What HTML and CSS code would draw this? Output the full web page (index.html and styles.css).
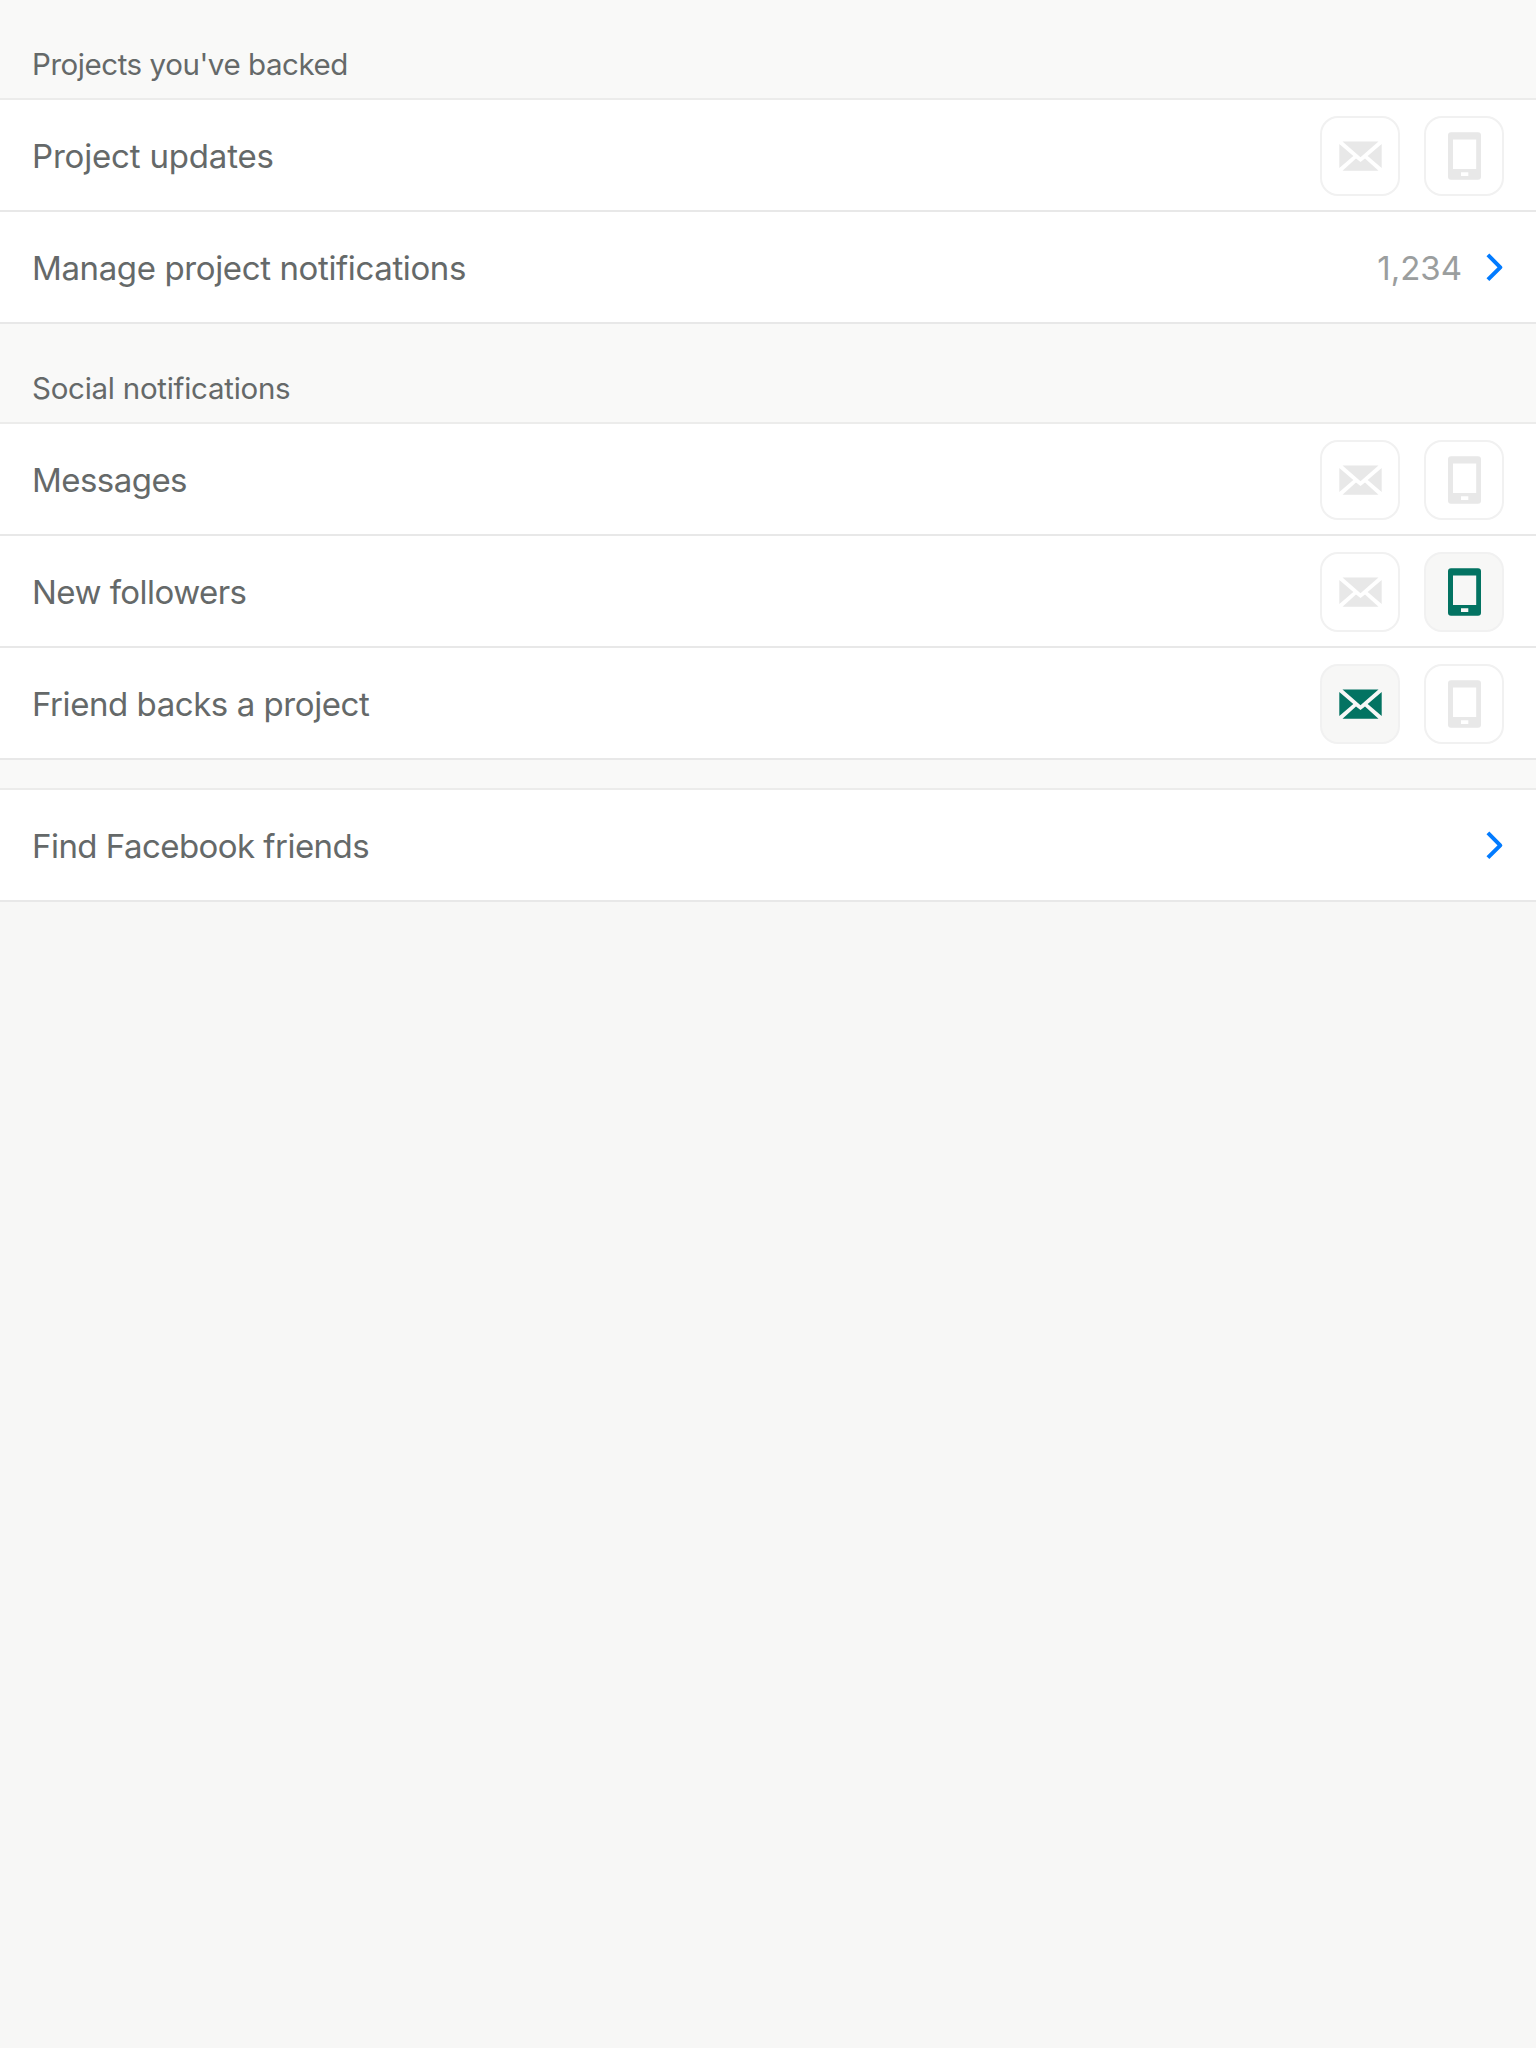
FILE: index.html
```html
<!DOCTYPE html>
<html lang="en">
<head>
<meta charset="utf-8">
<title>Notifications</title>
<link rel="stylesheet" href="styles.css">
</head>
<body>
<svg class="defs" aria-hidden="true">
  <symbol id="mail" viewBox="0 0 43 30">
    <path d="M3.5 .5H39.5L24 13.9l-2.5 2.3-2.5-2.3zM.3 3L14.3 15 .3 27zM42.7 3V27L28.7 15zM3.5 29.7L17 17.4l4.5 3.7 4.5-3.7L39.5 29.7z"/>
  </symbol>
  <symbol id="phone" viewBox="0 0 33 48">
    <path fill-rule="evenodd" d="M3 .3H30a3 3 0 0 1 3 3V44.8a3 3 0 0 1-3 3H3a3 3 0 0 1-3-3V3.3a3 3 0 0 1 3-3zM5 7.5V37H28.2V7.5zM13 40.3V44.1H20.3V40.3z"/>
  </symbol>
  <symbol id="chevron" viewBox="0 0 18 30">
    <path d="M1.9 1.9L14.3 14.3 1.9 26.7" fill="none" stroke="currentColor" stroke-width="4" stroke-linejoin="round"/>
  </symbol>
</svg>
<main>
  <h2 class="header snug">Projects you've backed</h2>
  <div class="row"><span class="label loose">Project updates</span>
    <button class="toggle"><svg class="mail"><use href="#mail"/></svg></button>
    <button class="toggle"><svg class="phone"><use href="#phone"/></svg></button>
  </div>
  <div class="row"><span class="label">Manage project notifications</span>
    <span class="count">1,234</span><svg class="chevron"><use href="#chevron"/></svg>
  </div>
  <h2 class="header">Social notifications</h2>
  <div class="row"><span class="label tight">Messages</span>
    <button class="toggle"><svg class="mail"><use href="#mail"/></svg></button>
    <button class="toggle"><svg class="phone"><use href="#phone"/></svg></button>
  </div>
  <div class="row"><span class="label tight">New followers</span>
    <button class="toggle"><svg class="mail"><use href="#mail"/></svg></button>
    <button class="toggle on"><svg class="phone"><use href="#phone"/></svg></button>
  </div>
  <div class="row"><span class="label snug">Friend backs a project</span>
    <button class="toggle on"><svg class="mail"><use href="#mail"/></svg></button>
    <button class="toggle"><svg class="phone"><use href="#phone"/></svg></button>
  </div>
  <div class="spacer"></div>
  <div class="row"><span class="label tight">Find Facebook friends</span>
    <svg class="chevron"><use href="#chevron"/></svg>
  </div>
</main>
</body>
</html>
```
FILE: styles.css
```css
* { box-sizing: border-box; }
body {
  margin: 0;
  min-height: 2048px;
  background: #f7f7f6;
  color: #656969;
  font-family: Inter, "Liberation Sans", sans-serif;
}
.defs { display: none; }
.header {
  display: flex;
  align-items: flex-end;
  height: 100px;
  margin: 0;
  padding: 0 32px 16px;
  background: #f9f9f8;
  border-bottom: 2px solid #ececeb;
  font-size: 29.5px;
  line-height: 36px;
  font-weight: 400;
  letter-spacing: -0.27px;
}
.row {
  display: flex;
  align-items: center;
  height: 112px;
  padding: 2px 32px 0;
  background: #fff;
  border-bottom: 2px solid #e8e8e8;
}
.label {
  flex: 1;
  font-size: 33px;
  line-height: 40px;
  letter-spacing: -0.38px;
}
.loose { letter-spacing: -0.18px; }
.snug { letter-spacing: -0.44px; }
.tight { letter-spacing: -0.54px; }
.toggle {
  display: flex;
  align-items: center;
  justify-content: center;
  width: 80px;
  height: 80px;
  margin-left: 24px;
  padding: 0;
  background: #fff;
  border: 2px solid #f1f1f1;
  border-radius: 18px;
  color: #e8e8e8;
}
.toggle.on { background: #f7f7f6; color: #037362; }
.mail { width: 43px; height: 30px; fill: currentColor; }
.phone { width: 33px; height: 48px; fill: currentColor; }
.count { color: #9b9e9e; font-size: 33px; line-height: 40px; }
.chevron { width: 18px; height: 30px; margin-left: 24px; color: #027bff; }
.spacer {
  height: 30px;
  background: #f9f9f8;
  border-bottom: 2px solid #ececeb;
}
```
